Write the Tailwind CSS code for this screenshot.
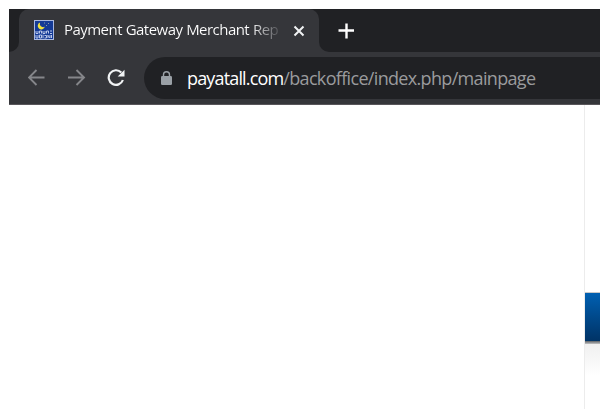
<!DOCTYPE html>
<html lang="en">
<head>
<meta charset="utf-8">
<title>Payment Gateway Merchant Report</title>
<script src="https://cdn.jsdelivr.net/npm/@tailwindcss/browser@4"></script>
</head>
<body class="h-[409px] w-[600px] overflow-hidden bg-white pl-[9px] pt-[9px] font-['Open_Sans','Noto_Sans',sans-serif]">
<header class="w-[591px]">
  <!-- Tab strip -->
  <div class="flex h-[43px] bg-[#202124]">
    <div class="flex w-[10px] items-end bg-[#35363a]"><div class="h-full w-full rounded-br-[10px] bg-[#202124]"></div></div>
    <div class="flex w-[300px] items-center rounded-t-[10px] bg-[#35363a] pl-[15px]">
      <svg class="-mt-0.5 h-5 w-5 shrink-0" viewBox="0 0 20 20">
        <rect width="20" height="20" fill="#a9b8df"/>
        <rect x="1" y="1" width="18" height="18" fill="#143a96"/>
        <path d="M6 2.500A3.600 3.600 0 1 0 10.800 6.800A3.500 3.500 0 0 1 6 2.500Z" fill="#f2e43c"/>
        <path d="M10 3h1M12 5.500h1M14 3.500h1" stroke="#8998a0"/>
        <path d="M2 11v2.500h2V11M5.500 13.500V11h2v2.500M9 11v2.500h2V11M12.500 13.500V11h2v2.500M16 11h2M16 13.500h2M2 15v3h2v-3M5.500 15v3h2v-3zM9 14.700v3.600M10.500 15.500h2v2.500h-2M14 15v3M14 15.500l2 2.500v-3M17.500 15v3" fill="none" stroke="#b9c6e8" stroke-width="1"/>
      </svg>
      <div class="-mt-[3px] ml-[10px] w-[217px] shrink-0 whitespace-nowrap bg-linear-to-r from-white from-[86%] to-[#45464a] bg-clip-text text-[15px] leading-[24px] tracking-[-0.54px] text-transparent [word-spacing:0.4px]">Payment Gateway Merchant Rep</div>
      <svg class="ml-[12px] h-3 w-3 shrink-0" viewBox="0 0 12 12" stroke="#f1f3f4" stroke-width="2"><path d="M1.500 1.500l9 9M10.500 1.500l-9 9"/></svg>
    </div>
    <div class="flex grow bg-[#35363a]">
      <div class="flex grow items-center rounded-bl-[10px] bg-[#202124] pl-[19px]">
        <svg class="h-4 w-4" viewBox="0 0 16 16" stroke="#fff" stroke-width="2.400"><path d="M8.500 .5v15M.5 7.500h16"/></svg>
      </div>
    </div>
  </div>
  <!-- Toolbar -->
  <div class="flex h-[53px] items-start border-b border-[#58565a] bg-[#35363a] pt-[5px]">
    <div class="flex h-[42px] w-[135px] shrink-0 items-center pl-[19px]">
      <svg class="h-[18px] w-[18px]" viewBox="0 0 18 18" fill="none" stroke="#85868a" stroke-width="1.900"><path d="M16.500 8.500H1.500M8.500 1L1 8.500L8.500 16"/></svg>
      <svg class="ml-[22px] h-[18px] w-[18px]" viewBox="0 0 18 18" fill="none" stroke="#85868a" stroke-width="1.900"><path d="M0 8.500H15.500M8.500 1L16 8.500L8.500 16"/></svg>
      <svg class="ml-[21px] h-[18px] w-[18px]" viewBox="0 0 18 18"><path d="M14.300 3.500A7.300 7.300 0 1 0 15.900 11" fill="none" stroke="#f1f3f4" stroke-width="2.200"/><path d="M17.500 .8V7.600H10.700Z" fill="#f1f3f4"/></svg>
    </div>
    <div class="flex h-[42px] grow items-center rounded-l-full bg-[#202124] pl-[17px]">
      <svg class="h-[14px] w-[11px] shrink-0" viewBox="0 0 11 14"><path d="M2.500 6V3.700a3 3 0 0 1 6 0V6" fill="none" stroke="#9aa0a6" stroke-width="1.400"/><rect y="5" width="11" height="9" rx="1.200" fill="#9aa0a6"/></svg>
      <div class="ml-[15px] whitespace-nowrap text-[18px] leading-[26px] tracking-[-0.67px] text-[#9a9b9d]"><span class="tracking-[-0.84px] text-white">payatall.com</span>/backoffice/index.php/mainpage</div>
    </div>
  </div>
</header>
<main class="flex h-[304px] w-[591px]">
  <div class="w-[575px] shrink-0"></div>
  <div class="grow border-l border-[#ececec]">
    <div class="h-[187px]"></div>
    <div class="h-px bg-[#c9c9c9]"></div>
    <div class="h-[48px] bg-linear-to-b from-[#0060b2] to-[#003366]"></div>
    <div class="h-[3px] bg-linear-to-b from-[#5c6066] to-[#c4c4c4]"></div>
    <div class="h-[32px] bg-linear-to-b from-[#f0f0f0] to-white"></div>
  </div>
</main>
</body>
</html>
